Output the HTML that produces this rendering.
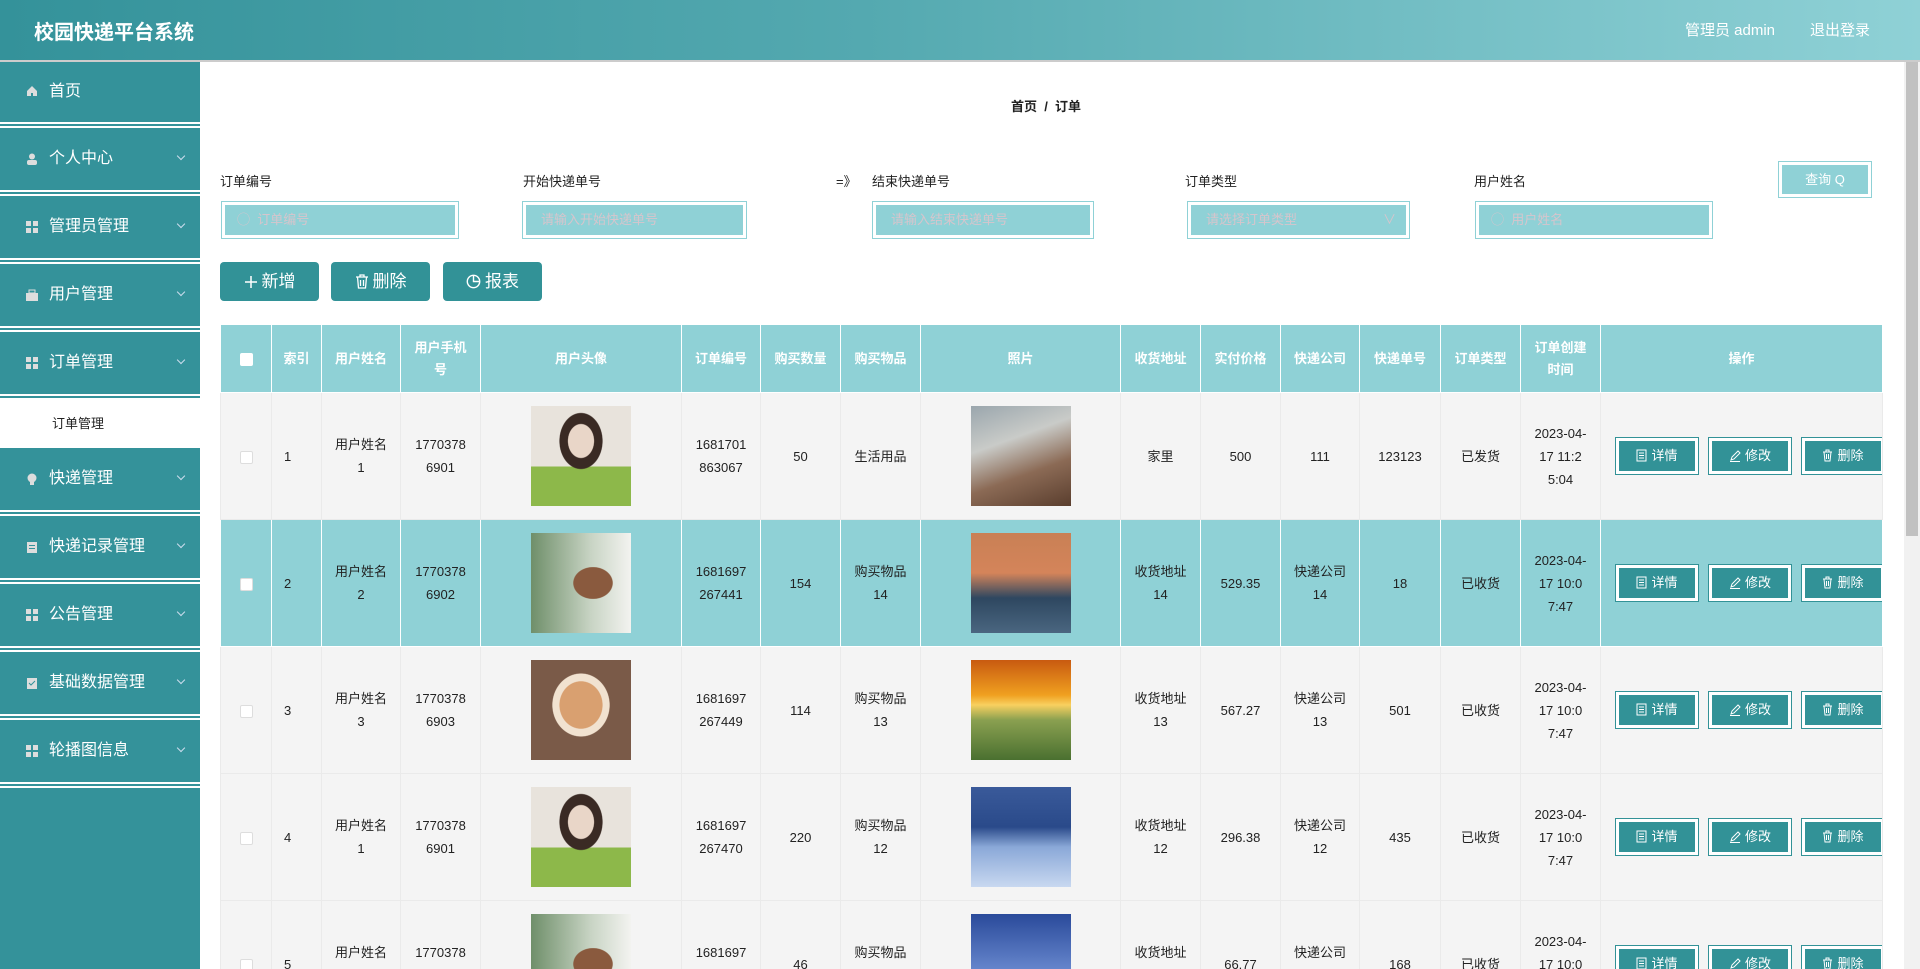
<!DOCTYPE html>
<html style="width:1920px;height:969px;overflow:hidden"><head><meta charset="utf-8">
<style>
*{margin:0;padding:0;box-sizing:border-box}
body{width:1920px;height:969px;overflow:hidden;font-family:"Liberation Sans","Noto Sans CJK SC",sans-serif;background:#fff;position:relative;color:#333}
.hd{position:absolute;left:0;top:0;width:1920px;height:62px;background:linear-gradient(90deg,#34929a 0%,#54a9b0 45%,#8fd1d6 100%);border-bottom:2px solid #ccc}
.hd .t{position:absolute;left:34px;top:16px;color:#fff;font-size:20px;font-weight:bold}
.hd .r{position:absolute;top:19px;color:#fff;font-size:15px}
.sb{position:absolute;left:0;top:62px;width:200px;height:907px;background:#34929a}
.it{position:absolute;left:0;width:200px;height:62px;background:#34929a;color:#fff;font-size:16px;line-height:62px;padding-left:49px}
.sep{position:absolute;left:0;width:200px;height:6px;background:#fff;border-top:2px solid #fff;border-bottom:2px solid #fff}
.sep i{display:block;height:2px;background:#34929a}
.ic{position:absolute;left:26px;top:25px;width:12px;height:12px}
.ch{position:absolute;left:178px;top:25px;width:6px;height:6px;border-right:1px solid #cde;border-bottom:1px solid #cde;transform:rotate(45deg)}
.sub{position:absolute;left:0;top:400px;width:200px;height:48px;background:#fff;color:#222;font-size:13px;line-height:48px;padding-left:52px}
.bc{position:absolute;left:1011px;top:96px;font-size:13px;color:#222;font-weight:bold}
.lb{position:absolute;top:171px;font-size:13px;color:#222}
.in{position:absolute;top:202px;height:36px;background:#8fd1d6;border:3px solid #fff;box-shadow:0 0 0 1px #8fd1d6;color:#d6c5cc;font-size:13px;line-height:30px;padding-left:12px}
.q{position:absolute;left:1779px;top:162px;width:92px;height:35px;background:#8fd1d6;border:3px solid #fff;box-shadow:0 0 0 1px #8fd1d6;color:#fff;font-size:13px;line-height:29px;text-align:center}
.ab{position:absolute;top:262px;height:39px;width:99px;background:#329297;border-radius:4px;color:#fff;font-size:17px;line-height:39px;text-align:center}
.ab svg{vertical-align:-2px;margin-right:4px}
table{position:absolute;left:220px;top:324px;border-collapse:collapse;table-layout:fixed;width:1662px}
th{background:#8fd1d6;color:#fff;font-size:13px;font-weight:bold;height:68px;border:1px solid #fff;padding:0 13px;line-height:22px;word-break:break-all}
td{height:127px;font-size:13px;color:#222;text-align:center;border:1px solid #eaeaea;padding:0 13px;line-height:23px;word-break:break-all}
tr.o td{background:#f4f4f4}
tr.e td{background:#8fd1d6;border-color:#fff}
td.l{text-align:left;padding-left:12px}
.cb{display:inline-block;width:13px;height:13px;background:#fff;border:1px solid #ddd;border-radius:2px;vertical-align:middle}
.im{width:100px;height:100px;margin:0 auto}
.ob{display:inline-block;width:82px;height:36px;background:#329297;border:3px solid #fff;box-shadow:0 0 0 1px #329297;color:#fff;font-size:13px;line-height:30px;text-align:center;margin-right:11px;vertical-align:middle}
.ob svg{vertical-align:-2px;margin-right:4px}
td.op{text-align:left;padding:0 0 0 15px;white-space:nowrap;overflow:hidden}
.scr{position:absolute;left:1904px;top:62px;width:16px;height:907px;background:#f1f1f1}
.scr i{position:absolute;left:2px;top:0;width:12px;height:474px;background:#c1c1c1}
</style></head><body>
<div class="hd"><div class="t">校园快递平台系统</div><div class="r" style="left:1685px">管理员 admin</div><div class="r" style="left:1810px">退出登录</div></div>
<div class="sb"></div>
<div class="it" style="top:62px;height:60px;line-height:60px"><svg class="ic" style="top:23px" viewBox="0 0 12 12"><path d="M6 1L1 6v5h4V8h2v3h4V6z" fill="#ddd"/></svg>首页</div>
<div class="sep" style="top:122px"><i></i></div>
<div class="it" style="top:128px"><svg class="ic" viewBox="0 0 12 12"><circle cx="6" cy="3.5" r="3" fill="#ddd"/><rect x="1" y="7" width="10" height="5" rx="2" fill="#ddd"/></svg>个人中心<span class="ch"></span></div>
<div class="sep" style="top:190px"><i></i></div>
<div class="it" style="top:196px"><svg class="ic" viewBox="0 0 12 12"><rect x="0" y="0" width="5" height="5" fill="#ddd"/><rect x="7" y="0" width="5" height="5" fill="#ddd"/><rect x="0" y="7" width="5" height="5" fill="#ddd"/><rect x="7" y="7" width="5" height="5" fill="#ddd"/></svg>管理员管理<span class="ch"></span></div>
<div class="sep" style="top:258px"><i></i></div>
<div class="it" style="top:264px"><svg class="ic" viewBox="0 0 12 12"><rect x="3" y="1" width="6" height="3" fill="none" stroke="#ddd"/><rect x="0" y="4" width="12" height="8" fill="#ddd"/></svg>用户管理<span class="ch"></span></div>
<div class="sep" style="top:326px"><i></i></div>
<div class="it" style="top:332px"><svg class="ic" viewBox="0 0 12 12"><rect x="0" y="0" width="5" height="5" fill="#ddd"/><rect x="7" y="0" width="5" height="5" fill="#ddd"/><rect x="0" y="7" width="5" height="5" fill="#ddd"/><rect x="7" y="7" width="5" height="5" fill="#ddd"/></svg>订单管理<span class="ch"></span></div>
<div class="sep" style="top:394px"><i></i></div>
<div class="sub">订单管理</div>
<div class="it" style="top:448px"><svg class="ic" viewBox="0 0 12 12"><circle cx="6" cy="5" r="4.5" fill="#ddd"/><rect x="4" y="9" width="4" height="3" fill="#ddd"/></svg>快递管理<span class="ch"></span></div>
<div class="sep" style="top:510px"><i></i></div>
<div class="it" style="top:516px"><svg class="ic" viewBox="0 0 12 12"><rect x="1" y="1" width="10" height="11" fill="#ddd"/><rect x="3" y="4" width="6" height="1" fill="#34929a"/><rect x="3" y="7" width="6" height="1" fill="#34929a"/></svg>快递记录管理<span class="ch"></span></div>
<div class="sep" style="top:578px"><i></i></div>
<div class="it" style="top:584px"><svg class="ic" viewBox="0 0 12 12"><rect x="0" y="0" width="5" height="5" fill="#ddd"/><rect x="7" y="0" width="5" height="5" fill="#ddd"/><rect x="0" y="7" width="5" height="5" fill="#ddd"/><rect x="7" y="7" width="5" height="5" fill="#ddd"/></svg>公告管理<span class="ch"></span></div>
<div class="sep" style="top:646px"><i></i></div>
<div class="it" style="top:652px"><svg class="ic" viewBox="0 0 12 12"><rect x="1" y="1" width="10" height="11" fill="#ddd"/><path d="M3 6l2 2 4-4" stroke="#34929a" fill="none"/></svg>基础数据管理<span class="ch"></span></div>
<div class="sep" style="top:714px"><i></i></div>
<div class="it" style="top:720px"><svg class="ic" viewBox="0 0 12 12"><rect x="0" y="0" width="5" height="5" fill="#ddd"/><rect x="7" y="0" width="5" height="5" fill="#ddd"/><rect x="0" y="7" width="5" height="5" fill="#ddd"/><rect x="7" y="7" width="5" height="5" fill="#ddd"/></svg>轮播图信息<span class="ch"></span></div>
<div class="sep" style="top:782px"><i></i></div>

<div class="bc">首页 &nbsp;/&nbsp; 订单</div>
<div class="lb" style="left:220px">订单编号</div>
<div class="lb" style="left:523px">开始快递单号</div>
<div class="lb" style="left:836px">=》</div>
<div class="lb" style="left:872px">结束快递单号</div>
<div class="lb" style="left:1185px">订单类型</div>
<div class="lb" style="left:1474px">用户姓名</div>
<div class="in" style="left:222px;width:236px">◯&nbsp; 订单编号</div>
<div class="in" style="left:523px;width:223px;padding-left:15px">请输入开始快递单号</div>
<div class="in" style="left:873px;width:220px;padding-left:15px">请输入结束快递单号</div>
<div class="in" style="left:1188px;width:221px;padding-left:15px">请选择订单类型<span style="position:absolute;right:10px">∨</span></div>
<div class="in" style="left:1476px;width:236px">◯&nbsp; 用户姓名</div>
<div class="q">查询 Q</div>
<div class="ab" style="left:220px"><svg width="14" height="14" viewBox="0 0 14 14"><path d="M7 1v12M1 7h12" stroke="#fff" stroke-width="1.5"/></svg>新增</div>
<div class="ab" style="left:331px"><svg width="14" height="15" viewBox="0 0 14 15"><path d="M1 3h12M5 3V1h4v2M2.5 3l1 11h7l1-11M5.5 6v6M8.5 6v6" stroke="#fff" stroke-width="1.3" fill="none"/></svg>删除</div>
<div class="ab" style="left:443px"><svg width="15" height="15" viewBox="0 0 15 15"><circle cx="7.5" cy="7.5" r="6.2" stroke="#fff" stroke-width="1.4" fill="none"/><path d="M7.5 1.5v6h6" stroke="#fff" stroke-width="1.4" fill="none"/></svg>报表</div>

<table>
<colgroup><col style="width:51px"><col style="width:50px"><col style="width:79px"><col style="width:80px"><col style="width:201px"><col style="width:79px"><col style="width:80px"><col style="width:80px"><col style="width:200px"><col style="width:80px"><col style="width:80px"><col style="width:79px"><col style="width:81px"><col style="width:80px"><col style="width:80px"><col style="width:282px"></colgroup>
<tr><th style="padding:0"><span class="cb" style="border:none"></span></th><th style="padding:0 6px">索引</th><th style="padding:0 6px">用户姓名</th><th>用户手机号</th><th>用户头像</th><th style="padding:0 6px">订单编号</th><th style="padding:0 6px">购买数量</th><th style="padding:0 6px">购买物品</th><th>照片</th><th style="padding:0 6px">收货地址</th><th style="padding:0 6px">实付价格</th><th style="padding:0 6px">快递公司</th><th style="padding:0 6px">快递单号</th><th style="padding:0 6px">订单类型</th><th>订单创建时间</th><th>操作</th></tr>
<tr class="o"><td style="padding:0"><span class="cb"></span></td><td class="l">1</td><td>用户姓名1</td><td>17703786901</td><td><div class="im" style="background:radial-gradient(ellipse at 50% 35%,#e9d6c8 0 18%,#3a2a24 19% 30%,transparent 31%),linear-gradient(#e8e3dc 60%,#8db84a 61%)"></div></td><td>1681701863067</td><td>50</td><td>生活用品</td><td><div class="im" style="background:linear-gradient(160deg,#9aa6ad 0%,#c9cbc8 35%,#8b6a55 65%,#5a3e2e 100%)"></div></td><td>家里</td><td>500</td><td>111</td><td style="padding:0">123123</td><td>已发货</td><td>2023-04-17 11:25:04</td><td class="op"><span class="ob"><svg width="11" height="13" viewBox="0 0 11 13"><rect x="1" y="1" width="9" height="11" stroke="#fff" fill="none"/><path d="M3 4h5M3 6.5h5M3 9h5" stroke="#fff"/></svg>详情</span><span class="ob"><svg width="12" height="13" viewBox="0 0 12 13"><path d="M2 11l1-3 6-6 2 2-6 6zM1 12.5h10" stroke="#fff" fill="none"/></svg>修改</span><span class="ob"><svg width="11" height="13" viewBox="0 0 11 13"><path d="M1 3h9M4 3V1h3v2M2 3l1 9h5l1-9M4.5 5v5M6.5 5v5" stroke="#fff" fill="none"/></svg>删除</span></td></tr>
<tr class="e"><td style="padding:0"><span class="cb"></span></td><td class="l">2</td><td>用户姓名2</td><td>17703786902</td><td><div class="im" style="background:radial-gradient(ellipse at 62% 50%,#8a5a3e 0 22%,transparent 23%),linear-gradient(90deg,#6f8f6a,#c8d4c4 60%,#f3f3f0)"></div></td><td>1681697267441</td><td>154</td><td>购买物品14</td><td><div class="im" style="background:linear-gradient(#c98055 0%,#d4845a 40%,#2e4760 65%,#4a6680 100%)"></div></td><td>收货地址14</td><td>529.35</td><td>快递公司14</td><td>18</td><td>已收货</td><td>2023-04-17 10:07:47</td><td class="op"><span class="ob"><svg width="11" height="13" viewBox="0 0 11 13"><rect x="1" y="1" width="9" height="11" stroke="#fff" fill="none"/><path d="M3 4h5M3 6.5h5M3 9h5" stroke="#fff"/></svg>详情</span><span class="ob"><svg width="12" height="13" viewBox="0 0 12 13"><path d="M2 11l1-3 6-6 2 2-6 6zM1 12.5h10" stroke="#fff" fill="none"/></svg>修改</span><span class="ob"><svg width="11" height="13" viewBox="0 0 11 13"><path d="M1 3h9M4 3V1h3v2M2 3l1 9h5l1-9M4.5 5v5M6.5 5v5" stroke="#fff" fill="none"/></svg>删除</span></td></tr>
<tr class="o"><td style="padding:0"><span class="cb"></span></td><td class="l">3</td><td>用户姓名3</td><td>17703786903</td><td><div class="im" style="background:radial-gradient(ellipse at 50% 45%,#d9a070 0 30%,#f1e2d0 31% 40%,#7a5a48 41%)"></div></td><td>1681697267449</td><td>114</td><td>购买物品13</td><td><div class="im" style="background:linear-gradient(#c85a10 0%,#f0a020 35%,#f8d060 45%,#8aa050 60%,#4a7030 100%)"></div></td><td>收货地址13</td><td>567.27</td><td>快递公司13</td><td>501</td><td>已收货</td><td>2023-04-17 10:07:47</td><td class="op"><span class="ob"><svg width="11" height="13" viewBox="0 0 11 13"><rect x="1" y="1" width="9" height="11" stroke="#fff" fill="none"/><path d="M3 4h5M3 6.5h5M3 9h5" stroke="#fff"/></svg>详情</span><span class="ob"><svg width="12" height="13" viewBox="0 0 12 13"><path d="M2 11l1-3 6-6 2 2-6 6zM1 12.5h10" stroke="#fff" fill="none"/></svg>修改</span><span class="ob"><svg width="11" height="13" viewBox="0 0 11 13"><path d="M1 3h9M4 3V1h3v2M2 3l1 9h5l1-9M4.5 5v5M6.5 5v5" stroke="#fff" fill="none"/></svg>删除</span></td></tr>
<tr class="o"><td style="padding:0"><span class="cb"></span></td><td class="l">4</td><td>用户姓名1</td><td>17703786901</td><td><div class="im" style="background:radial-gradient(ellipse at 50% 35%,#e9d6c8 0 18%,#3a2a24 19% 30%,transparent 31%),linear-gradient(#e8e3dc 60%,#8db84a 61%)"></div></td><td>1681697267470</td><td>220</td><td>购买物品12</td><td><div class="im" style="background:linear-gradient(#3a5a9a 0%,#2a4a8a 40%,#8aa8d8 60%,#c8d8f0 100%)"></div></td><td>收货地址12</td><td>296.38</td><td>快递公司12</td><td>435</td><td>已收货</td><td>2023-04-17 10:07:47</td><td class="op"><span class="ob"><svg width="11" height="13" viewBox="0 0 11 13"><rect x="1" y="1" width="9" height="11" stroke="#fff" fill="none"/><path d="M3 4h5M3 6.5h5M3 9h5" stroke="#fff"/></svg>详情</span><span class="ob"><svg width="12" height="13" viewBox="0 0 12 13"><path d="M2 11l1-3 6-6 2 2-6 6zM1 12.5h10" stroke="#fff" fill="none"/></svg>修改</span><span class="ob"><svg width="11" height="13" viewBox="0 0 11 13"><path d="M1 3h9M4 3V1h3v2M2 3l1 9h5l1-9M4.5 5v5M6.5 5v5" stroke="#fff" fill="none"/></svg>删除</span></td></tr>
<tr class="o"><td style="padding:0"><span class="cb"></span></td><td class="l">5</td><td>用户姓名2</td><td>17703786902</td><td><div class="im" style="background:radial-gradient(ellipse at 62% 50%,#8a5a3e 0 22%,transparent 23%),linear-gradient(90deg,#6f8f6a,#c8d4c4 60%,#f3f3f0)"></div></td><td>1681697267441</td><td>46</td><td>购买物品11</td><td><div class="im" style="background:linear-gradient(#2a4a9a,#6a8ad0 60%,#c0d0f0)"></div></td><td>收货地址11</td><td>66.77</td><td>快递公司11</td><td>168</td><td>已收货</td><td>2023-04-17 10:07:47</td><td class="op"><span class="ob"><svg width="11" height="13" viewBox="0 0 11 13"><rect x="1" y="1" width="9" height="11" stroke="#fff" fill="none"/><path d="M3 4h5M3 6.5h5M3 9h5" stroke="#fff"/></svg>详情</span><span class="ob"><svg width="12" height="13" viewBox="0 0 12 13"><path d="M2 11l1-3 6-6 2 2-6 6zM1 12.5h10" stroke="#fff" fill="none"/></svg>修改</span><span class="ob"><svg width="11" height="13" viewBox="0 0 11 13"><path d="M1 3h9M4 3V1h3v2M2 3l1 9h5l1-9M4.5 5v5M6.5 5v5" stroke="#fff" fill="none"/></svg>删除</span></td></tr>
</table>
<div class="scr"><i></i></div>
</body></html>
